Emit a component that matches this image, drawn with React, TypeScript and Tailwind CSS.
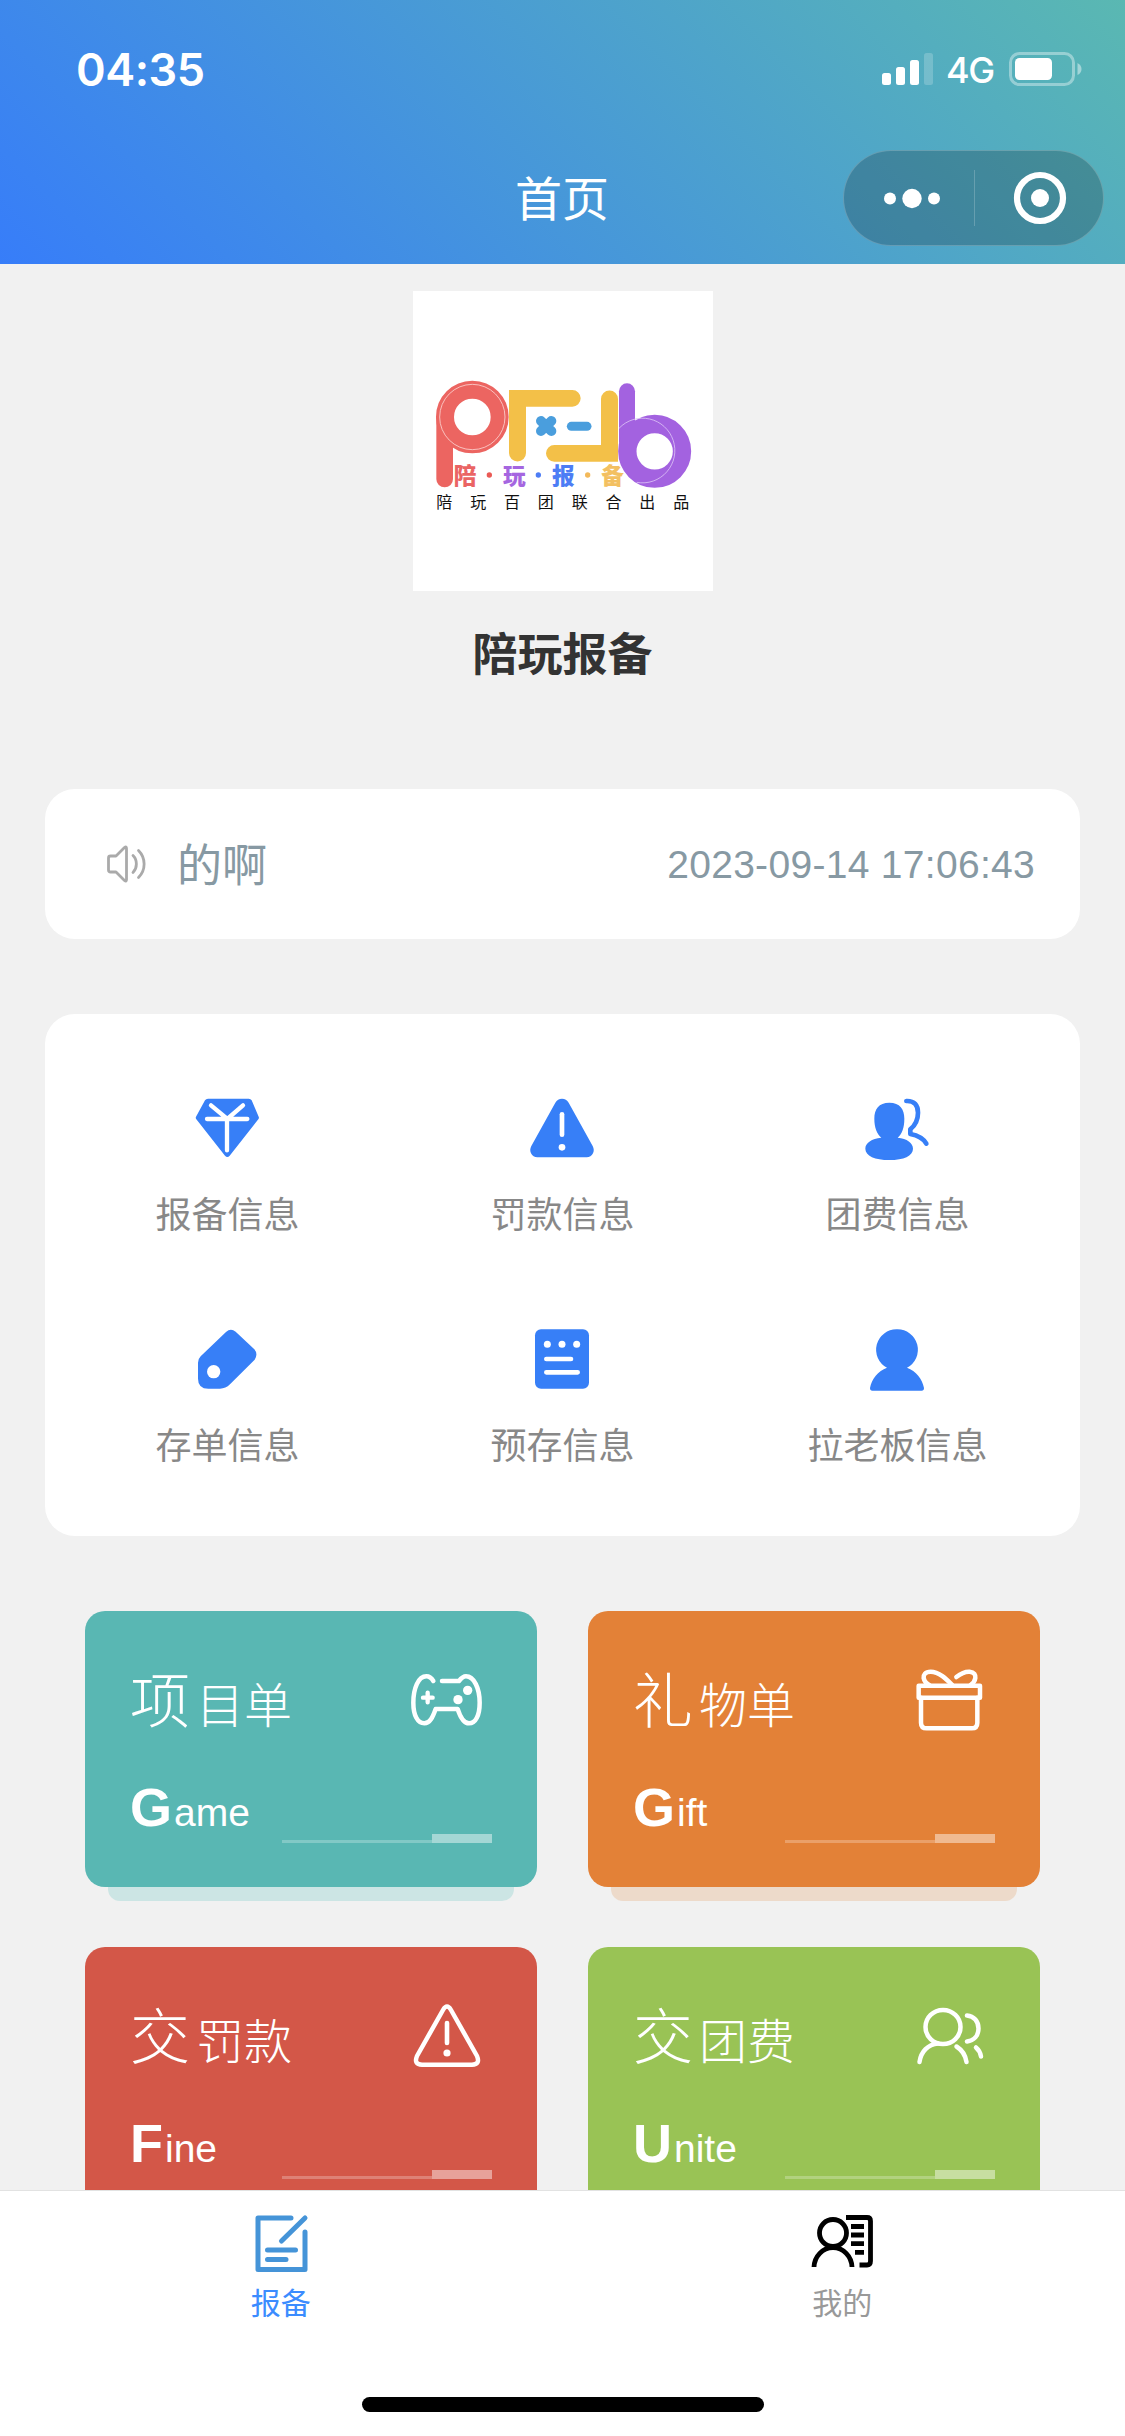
import type { ReactNode } from "react";

const CJK = "font-['Liberation_Sans','Noto_Sans_CJK_SC',sans-serif]";

/* ---------- menu icons ---------- */

function GemIcon() {
  return (
    <svg viewBox="156 66 216 216" className="size-[72px]">
      <path
        d="M204 86H326Q332 86 335 91L356 140Q358 144 355 148L269 257Q262 265 255 257L169 148Q166 144 168 140L195 91Q198 86 204 86Z"
        fill="#377ff7"
      />
      <path
        d="M213 106L262 147L309 106M201 147H322M261 147V241"
        fill="none"
        stroke="#fff"
        strokeWidth="13"
        strokeLinecap="round"
      />
    </svg>
  );
}

function WarnSolidIcon() {
  return (
    <svg viewBox="1161 66 216 216" className="size-[72px]">
      <path
        d="M1246 98Q1253 86 1266 86Q1279 86 1286 98L1358 228Q1364 240 1359 250Q1353 262 1340 262H1192Q1179 262 1173 250Q1168 240 1174 228Z"
        fill="#377ff7"
      />
      <path d="M1266 133V194" stroke="#fff" strokeWidth="14" strokeLinecap="round" />
      <circle cx="1266" cy="232" r="10" fill="#fff" />
    </svg>
  );
}

function GroupSolidIcon() {
  return (
    <svg viewBox="246 66 216 216" className="size-[72px]">
      <path
        d="M328 98C360 98 373 117 373 146C373 172 366 193 353 203C381 206 399 218 399 236C399 258 371 270 328 270C285 270 256 258 256 236C256 218 275 206 304 203C291 193 283 172 283 146C283 117 296 98 328 98Z"
        fill="#377ff7"
      />
      <path
        d="M379 93C403 92 414 105 414 128C414 150 404 167 391 178V192C412 196 429 203 439 221"
        fill="none"
        stroke="#377ff7"
        strokeWidth="14"
        strokeLinecap="round"
        strokeLinejoin="round"
      />
    </svg>
  );
}

function TagIcon() {
  return (
    <svg viewBox="156 69 216 216" className="size-[72px]">
      <path
        d="M258 96Q272 83 287 95L343 148Q355 162 344 179L270 253Q257 266 240 266H205Q174 266 174 236V188Q174 177 182 169Z"
        fill="#377ff7"
      />
      <circle cx="221" cy="215" r="20" fill="#fff" />
    </svg>
  );
}

function NoteIcon() {
  return (
    <svg viewBox="1161 69 216 216" className="size-[72px]">
      <rect x="1185" y="88" width="162" height="178" rx="18" fill="#377ff7" />
      <g fill="#fff">
        <circle cx="1222" cy="133" r="10.5" />
        <circle cx="1266" cy="133" r="10.5" />
        <circle cx="1310" cy="133" r="10.5" />
      </g>
      <path
        d="M1219 177H1293M1219 217H1313"
        stroke="#fff"
        strokeWidth="14"
        strokeLinecap="round"
      />
    </svg>
  );
}

function PersonIcon() {
  return (
    <svg viewBox="246 69 216 216" className="size-[72px]">
      <path
        d="M351 88A61 61 0 0 1 381 203C408 213 427 236 432 264Q432 272 425 272H277Q270 272 270 264C275 236 294 213 321 203A61 61 0 0 1 351 88Z"
        fill="#377ff7"
      />
    </svg>
  );
}

/* ---------- card icons ---------- */

function GameIcon() {
  return (
    <svg viewBox="984 183 234 234" className="size-[78px]" fill="none" stroke="#fff" strokeLinecap="round" strokeLinejoin="round">
      <path
        strokeWidth="13.500"
        d="M1060 243C1054 233 1047 229 1039 229C1015 229 1000 265 1000 308C1000 346 1013 370 1033 370C1050 370 1058 352 1067 327H1133C1141 352 1150 370 1167 370C1187 370 1199 346 1199 308C1199 265 1182 229 1158 229C1150 229 1144 234 1137 243H1086"
      />
      <path strokeWidth="13" d="M1043 278V307M1029 293H1058" />
      <circle cx="1163" cy="271" r="14" fill="#fff" stroke="none" />
      <circle cx="1134" cy="299" r="14" fill="#fff" stroke="none" />
    </svg>
  );
}

function GiftIcon() {
  return (
    <svg viewBox="994 183 234 234" className="size-[78px]" fill="none" stroke="#fff" strokeLinecap="round" strokeLinejoin="round" strokeWidth="13.500">
      <path d="M1017 257H1201V293H1017Z" />
      <path d="M1024 293V368Q1024 385 1041 385H1176Q1193 385 1193 368V293" />
      <path d="M1118 255C1100 237 1078 215 1053 215C1036 215 1031 225 1032 234C1034 245 1042 252 1050 256" />
      <path d="M1130 231C1144 220 1157 214 1170 215C1184 216 1188 225 1187 234C1186 244 1180 250 1172 256" />
    </svg>
  );
}

function WarnIcon() {
  return (
    <svg viewBox="0 0 78 78" className="size-[78px]" fill="none" stroke="#fff" strokeLinecap="round" strokeLinejoin="round">
      <path
        strokeWidth="4.500"
        d="M35 13Q39 6 43 13L69 59Q72.500 67.500 64 67.800H14Q5.500 67.500 9 59Z"
      />
      <path strokeWidth="4.600" d="M39 26V46" />
      <circle cx="39" cy="56" r="3.600" fill="#fff" stroke="none" />
    </svg>
  );
}

function GroupIcon() {
  return (
    <svg viewBox="0 0 78 78" className="size-[78px]" fill="none" stroke="#fff" strokeLinecap="round" strokeLinejoin="round" strokeWidth="4.500">
      <ellipse cx="32" cy="30" rx="17.500" ry="17" />
      <path d="M8.500 65C10 54.500 17 47.500 27 46.500" />
      <path d="M45.500 49.500C51 53 54.500 58 55.500 65" />
      <path d="M56 18.500C63 19 67.500 24.500 67.500 31.500C67.500 38.500 63 43.500 56 44.500" />
      <path d="M65 50.500C68 53 69.500 56 70 59.500" />
    </svg>
  );
}

const MENU = [
  { label: "报备信息", icon: <GemIcon /> },
  { label: "罚款信息", icon: <WarnSolidIcon /> },
  { label: "团费信息", icon: <GroupSolidIcon /> },
  { label: "存单信息", icon: <TagIcon /> },
  { label: "预存信息", icon: <NoteIcon /> },
  { label: "拉老板信息", icon: <PersonIcon /> },
];

const CARDS = [
  { title: "项目单", en: "Game", bg: "bg-[#59b7b3]", edge: "bg-[#cce5e4]", icon: <GameIcon /> },
  { title: "礼物单", en: "Gift", bg: "bg-[#e38137]", edge: "bg-[#eddaca]", icon: <GiftIcon /> },
  { title: "交罚款", en: "Fine", bg: "bg-[#d35748]", edge: "bg-[#ebd2ce]", icon: <WarnIcon /> },
  { title: "交团费", en: "Unite", bg: "bg-[#99c355]", edge: "bg-[#dfe8d0]", icon: <GroupIcon /> },
];

function StatusBar() {
  return (
    <div className="flex h-[132px] items-center justify-between pt-1.5 pr-[42px] pl-[76px] font-['Inter',sans-serif] text-white">
      <span className="text-[45px] leading-none font-semibold tracking-[-0.5px]">04:35</span>
      <div className="flex items-center">
        <svg viewBox="0 0 52 34" className="h-[34px] w-[52px]" fill="#fff">
          <rect x="0" y="21" width="9" height="12" rx="2.500" />
          <rect x="14" y="15" width="9" height="18" rx="2.500" />
          <rect x="28" y="8" width="9" height="25" rx="2.500" />
          <rect x="42" y="1" width="9" height="32" rx="2.500" opacity="0.2" />
        </svg>
        <span className="ml-3 w-[50px] pt-0.5 text-[36px] leading-none font-medium tracking-[-1.3px]">4G</span>
        <svg viewBox="0 0 74 34" className="ml-[13px] h-[34px] w-[74px]">
          <rect x="1.500" y="1.500" width="63" height="31" rx="9" fill="none" stroke="#fff" strokeOpacity="0.38" strokeWidth="3" />
          <rect x="6" y="6" width="37" height="22" rx="4.500" fill="#fff" />
          <path d="M68.500 11Q72.500 13 72.500 17Q72.500 21 68.500 23Z" fill="#fff" opacity="0.45" />
        </svg>
      </div>
    </div>
  );
}

function NavBar() {
  return (
    <div className="grid h-[132px] grid-cols-[1fr_auto_1fr] items-center pr-[21px]">
      <span />
      <h1 className="translate-x-[10px] pt-[3px] text-[47px] leading-none text-white">首页</h1>
      <div className="flex h-24 w-[261px] items-center justify-self-end rounded-full border border-white/20 bg-black/20">
        <svg viewBox="0 0 130 96" className="h-24 w-[130px]" fill="#fff">
          <circle cx="46" cy="48.500" r="6" />
          <circle cx="68" cy="48.500" r="9.700" />
          <circle cx="90" cy="48.500" r="6" />
        </svg>
        <div className="h-14 w-px bg-white/20" />
        <svg viewBox="0 0 128 96" className="h-24 w-32">
          <circle cx="65" cy="48" r="23" fill="none" stroke="#fff" strokeWidth="6.200" />
          <circle cx="65" cy="48" r="9" fill="#fff" />
        </svg>
      </div>
    </div>
  );
}

function Logo() {
  const words = [
    { t: "陪", x: 131, c: "#ea6464" },
    { t: "玩", x: 279, c: "#a566e0" },
    { t: "报", x: 426, c: "#4d7df5" },
    { t: "备", x: 574, c: "#f3c061" },
  ];
  const tagline = "陪玩百团联合出品".split("");

  return (
    <svg viewBox="9 18 900 900" className="size-[300px] bg-white">
      {/* p */}
      <path d="M104 400V582" stroke="#ec6561" strokeWidth="50" strokeLinecap="round" />
      <circle cx="187" cy="396" r="82" fill="none" stroke="#ec6561" strokeWidth="54" />
      <circle cx="187" cy="396" r="98" fill="none" stroke="#fbd3d0" strokeWidth="2.500" />
      {/* w */}
      <path d="M297 315H487A25 25 0 0 1 487 365H348V504A25 25 0 0 1 297 504Z" fill="#f3c048" />
      <path d="M624 530H433A25 25 0 0 1 433 480H573V342A25 25 0 0 1 624 342Z" fill="#f3c048" />
      <path d="M393 408L424 438M424 408L393 438" stroke="#4a9edd" strokeWidth="30" strokeLinecap="round" />
      <path d="M484 424H531" stroke="#4a9edd" strokeWidth="27" strokeLinecap="round" />
      {/* b */}
      <path d="M651 319V470" stroke="#a362e0" strokeWidth="48" strokeLinecap="round" />
      <circle cx="734" cy="499" r="82" fill="none" stroke="#a362e0" strokeWidth="55" />
      <path d="M627 430A97 97 0 1 1 680 592" fill="none" stroke="#dcc3f5" strokeWidth="2.500" />
      <g className="font-['Noto_Sans_CJK_SC',sans-serif] font-black" fontSize="68">
        {words.map((w) => (
          <text key={w.t} x={w.x} y="597" fill={w.c}>
            {w.t}
          </text>
        ))}
      </g>
      <circle cx="238" cy="570" r="8" fill="#ea5a55" />
      <circle cx="385" cy="570" r="8" fill="#4d7df5" />
      <circle cx="533" cy="570" r="8" fill="#f3b95a" />
      <g className="font-['Noto_Sans_CJK_SC',sans-serif] font-normal" fontSize="48" fill="#111">
        {tagline.map((t, i) => (
          <text key={t} x={79 + i * 101.5} y="668">
            {t}
          </text>
        ))}
      </g>
    </svg>
  );
}

function Notice() {
  return (
    <section className="mx-[45px] mt-[103px] flex h-[150px] items-center rounded-[30px] bg-white pr-[45px] pl-[60px] text-[#8799a3]">
      <svg viewBox="0 0 42 40" className="h-10 w-[42px]" fill="none" stroke="#aaa" strokeWidth="2.800" strokeLinecap="round" strokeLinejoin="round">
        <path d="M3.500 14Q3.500 12 5.500 12H11L19.500 3.500Q21.500 2 21.500 4.500V35.500Q21.500 38 19.500 36.500L11 28H5.500Q3.500 28 3.500 26Z" />
        <path d="M28 11.500C32.500 16 32.500 24 28 28.500M33.500 6.500C41 14 41 26 33.500 33.500" />
      </svg>
      <span className="ml-[30px] pt-1 text-[45px] leading-none">的啊</span>
      <span className="ml-auto text-[39px] leading-none tracking-[0.3px]">2023-09-14 17:06:43</span>
    </section>
  );
}

function Menu() {
  return (
    <ul className="mx-[45px] mt-[75px] grid h-[522px] shrink-0 grid-cols-3 content-start gap-y-20 rounded-[30px] bg-white px-[15px] pt-[78px]">
      {MENU.map((m) => (
        <li key={m.label} className="flex flex-col items-center">
          {m.icon}
          <span className="mt-[25px] text-[36px] leading-[54px] text-[#888]">{m.label}</span>
        </li>
      ))}
    </ul>
  );
}

function Card({ title, en, bg, edge, icon }: { title: string; en: string; bg: string; edge: string; icon: ReactNode }) {
  return (
    <article className={`relative h-[276px] rounded-[20px] text-white ${bg}`}>
      <div className={`absolute inset-x-[23px] top-full h-[14px] rounded-b-[12px] ${edge}`} />
      <div className="flex h-[130px] items-end justify-between pr-[51px] pb-[2px] pl-[45px]">
        <h3 className="-mb-[2px] flex items-baseline font-light">
          <span className="text-[60px] leading-[76px]">{title[0]}</span>
          <span className="ml-[6px] text-[48px] leading-none">{title.slice(1)}</span>
        </h3>
        {icon}
      </div>
      <div className="mt-9 flex items-end justify-between pr-[45px] pl-[45px]">
        <p className="flex items-baseline leading-[60px]">
          <span className="text-[54px] font-bold">{en[0]}</span>
          <span className="ml-[2px] text-[39px]">{en.slice(1)}</span>
        </p>
        <div className="flex w-[210px] items-end">
          <div className="h-[3px] w-[150px] bg-white/25" />
          <div className="h-[9px] w-[60px] bg-white/45" />
        </div>
      </div>
    </article>
  );
}

function TabBar() {
  return (
    <nav className="flex h-[246px] flex-col border-t border-[#e2e2e2] bg-white">
      <div className="grid h-[206px] grid-cols-2 pr-[2px] text-[30px] leading-[42px]">
        <div className="flex flex-col items-center pt-[21px] text-[#3b8cff]">
          <svg viewBox="0 0 60 64" className="h-16 w-[60px]" fill="none" stroke="#4594d8" strokeWidth="5" strokeLinecap="round" strokeLinejoin="round">
            <path d="M40 6H7V57.500H54V20" />
            <path d="M54 6L30.500 29M16.500 38H44.500M16.500 47.500H35" />
          </svg>
          <span className="mt-[7px]">报备</span>
        </div>
        <div className="flex flex-col items-center pt-[21px] text-[#999]">
          <svg viewBox="0 0 64 64" className="h-16 w-16" fill="none" stroke="#000" strokeWidth="4.800">
            <circle cx="23" cy="21" r="13.500" />
            <path d="M4 55C4.500 44.500 12.500 35.700 23 35.700C33.500 35.700 41.500 44.500 42 55" />
            <path d="M36 5.500H57Q60.500 5.500 60.500 9V49Q60.500 53 57 53H49.500" />
            <path d="M41 14.500H54M41 23H54M41 31.700H54M45 40.300H54" />
          </svg>
          <span className="mt-[7px]">我的</span>
        </div>
      </div>
      <div className="mx-auto h-[15px] w-[402px] rounded-full bg-black" />
    </nav>
  );
}

export default function App() {
  return (
    <div className={`flex h-[2436px] w-[1125px] flex-col overflow-hidden bg-[#f1f1f1] ${CJK}`}>
      <header className="h-[264px] shrink-0 bg-[linear-gradient(45deg,#377df9,#5ab8b2)]">
        <StatusBar />
        <NavBar />
      </header>

      <main className="min-h-0 flex-1 overflow-hidden pt-[27px]">
        <div className="flex flex-col items-center">
          <Logo />
          <h2 className="mt-[35px] text-[45px] leading-[60px] font-bold text-[#333]">陪玩报备</h2>
        </div>
        <Notice />
        <Menu />
        <div className="mt-[75px] grid grid-cols-2 gap-x-[51px] gap-y-[60px] px-[85px]">
          {CARDS.map((c) => (
            <Card key={c.en} {...c} />
          ))}
        </div>
      </main>

      <TabBar />
    </div>
  );
}
